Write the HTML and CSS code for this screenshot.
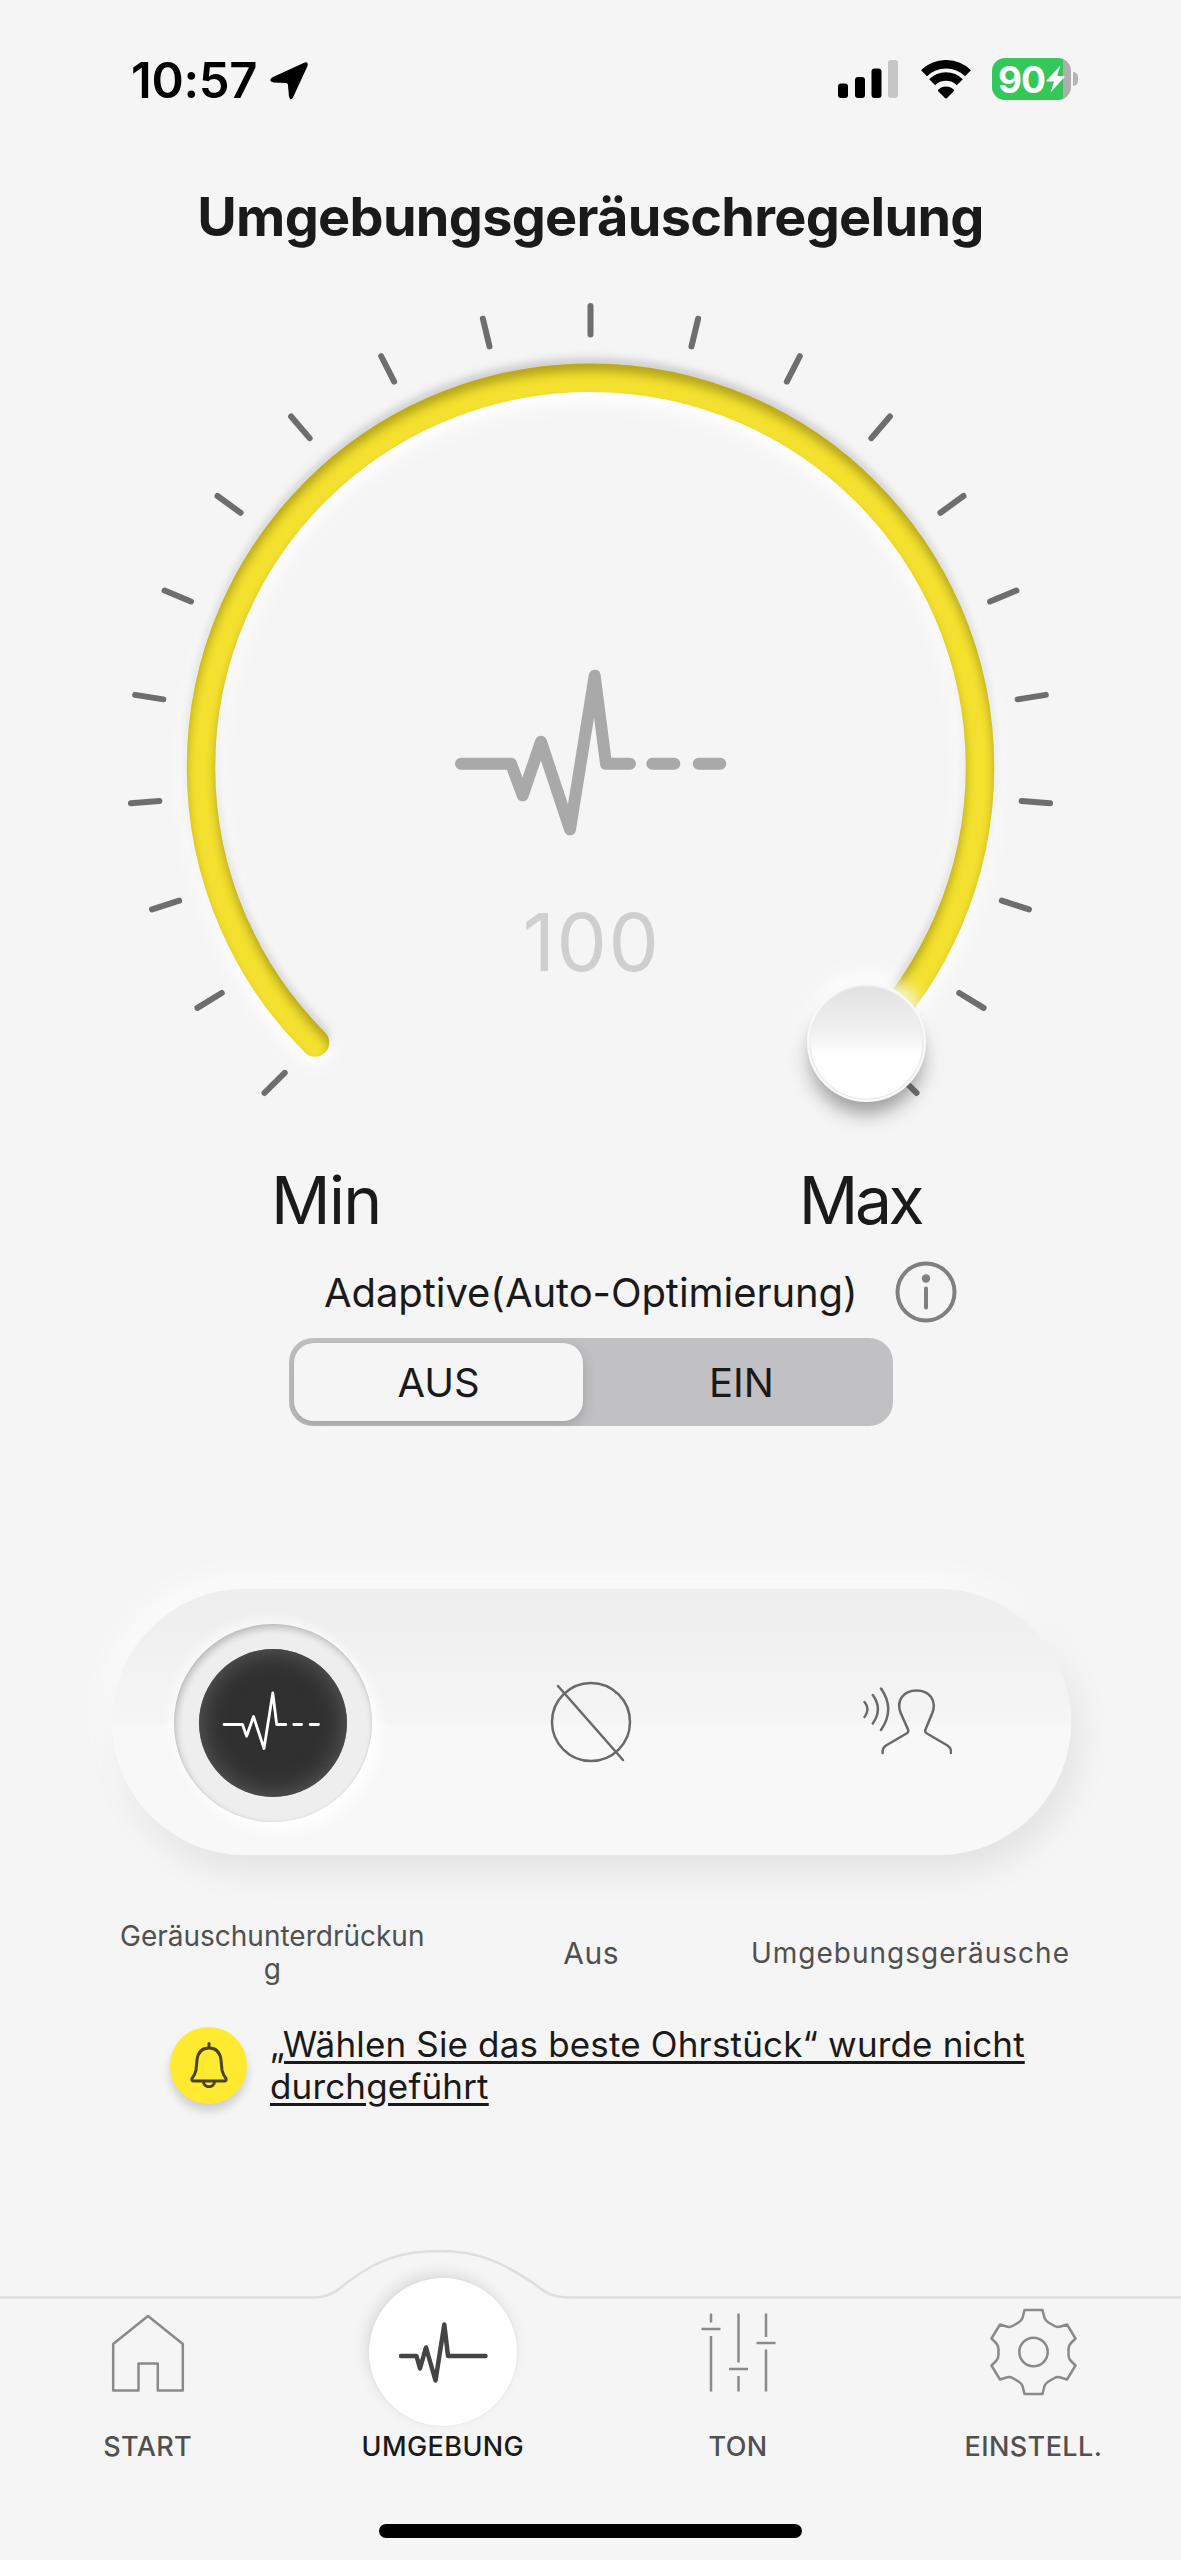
FILE: index.html
```html
<!DOCTYPE html>
<html lang="de">
  <head>
    <meta charset="UTF-8">
    <meta name="viewport" content="width=device-width, initial-scale=1">
    <title>Umgebungsgeräuschregelung</title>
    <link rel="stylesheet" href="styles.css">
  </head>
  <body>
    <header class="status-bar">
      <span class="time">10:57</span>
      <svg class="location" width="38" height="38" viewBox="0 0 38 38">
        <path d="M33 1.200Q38.800 -1.500 37.500 4L23 35.500Q20.300 39.500 19 34.500L17.900 22.500Q17.700 21 16 20.900L3.500 20.500Q-2.200 19.200 2 15.500Z"/>
      </svg>
      <svg class="signal" width="61" height="38" viewBox="0 0 61 38">
        <rect x="0" y="23.500" width="10" height="14.500" rx="3"/>
        <rect x="17" y="17" width="10" height="21" rx="3"/>
        <rect x="33.500" y="8.500" width="10" height="29.500" rx="3"/>
        <rect class="off" x="50" y="0" width="10" height="38" rx="3"/>
      </svg>
      <svg class="wifi" width="54" height="39" viewBox="0 0 54 39">
        <path d="M5 13.200A31.500 31.500 0 0 1 49 13.200M13.200 22.300A19.500 19.500 0 0 1 40.800 22.300"/>
        <path class="dot" d="M27 26.500Q31.500 26.500 34.600 29.600Q35.500 30.500 34.600 31.500L28 38Q27 39 26 38L19.400 31.500Q18.500 30.500 19.400 29.600Q22.500 26.500 27 26.500Z"/>
      </svg>
      <div class="battery">
        <div class="battery-body">
          <span>90</span>
          <svg width="19" height="28" viewBox="0 0 19 28"><path d="M14.500 0.500L0.500 15.500Q0 16.500 1 16.500H8L4.500 27.500L18.500 12Q19 11 18 11H11Z"/></svg>
        </div>
        <div class="battery-tip"></div>
      </div>
    </header>

    <h1 class="title">Umgebungsgeräuschregelung</h1>

    <svg class="dial" width="1181" height="865" viewBox="-590.500 -493 1181 865">
      <defs>
        <line id="tick" y1="-461" y2="-432.500"/>
        <linearGradient id="knob" x1="0" y1="0" x2="0" y2="1">
          <stop offset="0" stop-color="#e1e1e1"/>
          <stop offset="0.4" stop-color="#f1f1f1"/>
          <stop offset="0.62" stop-color="#ffffff"/>
        </linearGradient>
        <filter id="groove" filterUnits="userSpaceOnUse" x="-460" y="-460" width="920" height="830" color-interpolation-filters="sRGB">
          <!-- light rim around the track -->
          <feGaussianBlur in="SourceAlpha" stdDeviation="13" result="b1"/>
          <feOffset in="b1" dy="8" result="o1"/>
          <feFlood flood-color="#ffffff" flood-opacity="1"/>
          <feComposite in2="o1" operator="in" result="light"/>
          <!-- soft dark edge above -->
          <feGaussianBlur in="SourceAlpha" stdDeviation="4.500" result="b2"/>
          <feOffset in="b2" dy="-5" result="o2"/>
          <feFlood flood-color="#85858f" flood-opacity="0.420"/>
          <feComposite in2="o2" operator="in" result="dark"/>
          <feGaussianBlur in="SourceAlpha" stdDeviation="4" result="b4"/>
          <feOffset in="b4" dy="5" result="o4"/>
          <feFlood flood-color="#ffffff"/>
          <feComposite in2="o4" operator="in" result="light2"/>
          <!-- inner shade -->
          <feGaussianBlur in="SourceAlpha" stdDeviation="5" result="b3"/>
          <feOffset in="b3" dy="8" result="o3"/>
          <feComposite in="SourceAlpha" in2="o3" operator="out" result="cut"/>
          <feFlood flood-color="#5a5000" flood-opacity="0.400"/>
          <feComposite in2="cut" operator="in" result="inner"/>
          <feMerge>
            <feMergeNode in="light"/>
            <feMergeNode in="dark"/>
            <feMergeNode in="light2"/>
            <feMergeNode in="SourceGraphic"/>
            <feMergeNode in="inner"/>
          </feMerge>
        </filter>
        <filter id="soft" x="-50%" y="-50%" width="200%" height="200%"><feGaussianBlur stdDeviation="10"/></filter>
      </defs>
      <path class="track" filter="url(#groove)" d="M-275.500 276.500A389.500 389.500 0 1 1 275.500 276.500"/>
      <g class="ticks" transform="translate(0 1)">
        <use href="#tick" transform="rotate(-135)"/>
        <use href="#tick" transform="rotate(-121.500)"/>
        <use href="#tick" transform="rotate(-108)"/>
        <use href="#tick" transform="rotate(-94.500)"/>
        <use href="#tick" transform="rotate(-81)"/>
        <use href="#tick" transform="rotate(-67.500)"/>
        <use href="#tick" transform="rotate(-54)"/>
        <use href="#tick" transform="rotate(-40.500)"/>
        <use href="#tick" transform="rotate(-27)"/>
        <use href="#tick" transform="rotate(-13.500)"/>
        <use href="#tick"/>
        <use href="#tick" transform="rotate(13.500)"/>
        <use href="#tick" transform="rotate(27)"/>
        <use href="#tick" transform="rotate(40.500)"/>
        <use href="#tick" transform="rotate(54)"/>
        <use href="#tick" transform="rotate(67.500)"/>
        <use href="#tick" transform="rotate(81)"/>
        <use href="#tick" transform="rotate(94.500)"/>
        <use href="#tick" transform="rotate(108)"/>
        <use href="#tick" transform="rotate(121.500)"/>
        <use href="#tick" transform="rotate(135)"/>
      </g>
      <circle cx="275" cy="267" r="59" fill="#ffffff" filter="url(#soft)"/>
      <circle cx="276" cy="291" r="56" fill="#000000" fill-opacity="0.380" filter="url(#soft)"/>
      <circle cx="276" cy="276.500" r="59.500" fill="#fafafa"/>
      <circle cx="276" cy="276.500" r="56.500" fill="url(#knob)" stroke="#ececec" stroke-width="1.500"/>
      <path class="pulse-big" d="M-129.500 -2.300H-79.500L-67.800 29.300L-49.500 -24.300L-20.500 63.300L4.200 -90.300L15.500 -2.300H39.500M61.800 -2.300H83.800M108.200 -2.300H129.800"/>
      <text class="value" x="1" y="205" text-anchor="middle">100</text>
    </svg>

    <div class="range">
      <span class="min">Min</span>
      <span class="max">Max</span>
    </div>

    <div class="adaptive">
      <span class="adaptive-label">Adaptive(Auto-Optimierung)</span>
      <svg class="info" width="62" height="62" viewBox="0 0 62 62">
        <circle cx="31" cy="31" r="28.500"/>
        <path d="M31 27.500V46.500"/>
        <circle class="dot" cx="31" cy="17.500" r="4.200"/>
      </svg>
    </div>

    <div class="segmented">
      <button class="segment selected">AUS</button>
      <button class="segment">EIN</button>
    </div>

    <div class="modes">
      <div class="mode">
        <div class="ring">
          <div class="ring-core">
            <svg class="pulse-small" width="100" height="62" viewBox="0 0 100 62">
              <path d="M3 34.500H21.500L25.600 46.300L32.500 26.500L43 58.500L51.800 3L55.700 34.500H64.800M72.800 34.500H80.600M89.200 34.500H97.500"/>
            </svg>
          </div>
        </div>
      </div>
      <div class="mode">
        <svg class="line-icon" width="82" height="82" viewBox="0 0 82 82">
          <circle cx="41" cy="41" r="39"/>
          <path d="M8 5L73 79"/>
        </svg>
      </div>
      <div class="mode">
        <svg class="line-icon person" width="90" height="68" viewBox="0 0 90 68">
          <path d="M20.600 66V64.500Q20.800 60.500 24 58.500L44.500 46.500Q47 45 46 42.500L38.500 25.500C34 13 42 3.600 54.500 3.600S75 13 70.500 25.500L63.500 42.500Q62.500 45 65 46.500L85.500 58.500Q88.800 60.500 89 64.500V66"/>
          <path d="M2.500 15Q8.500 22 2.500 30M10.800 8Q21 22 10.800 36.500M19 1.500Q33.500 22 19 43"/>
        </svg>
      </div>
    </div>
    <div class="mode-labels">
      <span class="mode-label noise">Geräuschunterdrückung</span>
      <span class="mode-label off">Aus</span>
      <span class="mode-label ambient">Umgebungsgeräusche</span>
    </div>

    <div class="notice">
      <div class="bell">
        <svg width="38" height="46" viewBox="0 0 38 46">
          <path d="M19 1.500V6M3.500 39H34.500Q36.500 39 36 36.500Q33 33 32 28L31 18C30 10 26 6 19 6S8 10 7 18L6 28Q5 33 2 36.500Q1.500 39 3.500 39ZM13.500 39.500C13.500 46.500 24.500 46.500 24.500 39.500"/>
        </svg>
      </div>
      <a class="notice-text">„Wählen Sie das beste Ohrstück“ wurde nicht<br>durchgeführt</a>
    </div>

    <nav class="tab-bar">
      <svg class="tab-edge" width="1181" height="70" viewBox="0 0 1181 70">
        <path d="M-2 57.500H314C330 57.500 338 50 349 41C378 20 400 11 440 11C478 11 502 22 533 43C544 51 550 57.500 570 57.500H1183"/>
      </svg>
      <a class="tab">
        <span class="tab-icon">
          <svg width="74" height="80" viewBox="0 -1.500 74 80">
            <path d="M2.200 77V30.500L37 2.500L71.800 30.500V77H46.800V50H27.500V77Z"/>
          </svg>
        </span>
        <span class="tab-label">START</span>
      </a>
      <a class="tab active">
        <span class="tab-icon">
          <svg width="90" height="62" viewBox="0 0 90 62">
            <path d="M3 35H18.500L22 47.500L28 26.500L37.500 59.500L46.300 3.500L50 35H87.500"/>
          </svg>
        </span>
        <span class="tab-label">UMGEBUNG</span>
      </a>
      <a class="tab">
        <span class="tab-icon">
          <svg width="78" height="82" viewBox="-0.500 -0.500 78 82">
            <path d="M11.500 2V11M11.500 24.500V80M39 2V51M39 64.500V80M66.500 2V25.500M66.500 38V80M2 17.500H21M29.500 57.500H48.500M57 31.500H76"/>
          </svg>
        </span>
        <span class="tab-label">TON</span>
      </a>
      <a class="tab">
        <span class="tab-icon">
          <svg width="88" height="88" viewBox="-44.500 -44 88 88">
            <path d="M-9 -42H9L11 -34Q12 -31.500 15 -29.500L21 -26Q23.500 -24.500 27 -25.500L33.500 -27.500L42 -13.500L37.500 -9Q35 -6.500 35 -3V3Q35 6.500 37.500 9L42 13.500L33.500 27.500L27 25.500Q23.500 24.500 21 26L15 29.500Q12 31.500 11 34L9 42H-9L-11 34Q-12 31.500 -15 29.500L-21 26Q-23.500 24.500 -27 25.500L-33.500 27.500L-42 13.500L-37.500 9Q-35 6.500 -35 3V-3Q-35 -6.500 -37.500 -9L-42 -13.500L-33.500 -27.500L-27 -25.500Q-23.500 -24.500 -21 -26L-15 -29.500Q-12 -31.500 -11 -34Z"/>
            <circle r="14.200"/>
          </svg>
        </span>
        <span class="tab-label">EINSTELL.</span>
      </a>
    </nav>
    <div class="home-indicator"></div>
  </body>
</html>
```

FILE: styles.css
```css
* { box-sizing: border-box; }
body {
  margin: 0;
  width: 1181px;
  height: 2560px;
  overflow: hidden;
  background-color: #f5f5f5;
  color: #1a1a1a;
  font-family: Inter, "Liberation Sans", sans-serif;
}
svg { display: block; flex: none; }

/* status bar */
.status-bar {
  display: flex;
  align-items: center;
  height: 161px;
  padding: 0 103px 0 131px;
  color: #000;
}
.time {
  font-size: 49px;
  font-weight: 600;
  letter-spacing: -0.3px;
  width: 139px;
  white-space: nowrap;
}
.signal { margin: -3px 20px 0 auto; }
.signal .off { fill: #c6c6c6; }
.wifi { margin: -3px 19px 0 0; fill: none; stroke: #000; stroke-width: 8.5; }
.wifi .dot { fill: #000; stroke: none; }
.battery { display: flex; align-items: center; gap: 2px; margin-top: -3px; }
.battery-body {
  display: flex;
  align-items: center;
  width: 79px;
  height: 42px;
  padding-left: 6px;
  border-radius: 13px;
  background: linear-gradient(90deg, #34c759 71px, #aeaeae 71px);
  color: #fff;
  font-size: 37px;
  font-weight: 700;
  letter-spacing: -1px;
}
.battery-body svg { fill: #fff; margin-left: 1px; }
.battery-tip {
  width: 5px;
  height: 14px;
  border-radius: 0 5px 5px 0;
  background-color: #b5b5b5;
}

.title {
  margin: 0;
  font-size: 54px;
  font-weight: 700;
  line-height: 112px;
  letter-spacing: -.7px;
  text-align: center;
}

/* dial */
.track { fill: none; stroke: #f3e02f; stroke-width: 28.5; stroke-linecap: round; }
.ticks { stroke: #6e6e6e; stroke-width: 6; stroke-linecap: round; }
.pulse-big {
  fill: none;
  stroke: #a9a9a9;
  stroke-width: 12;
  stroke-linecap: round;
  stroke-linejoin: round;
}
.value { fill: #cfcfcf; font-size: 80px; font-weight: 400; letter-spacing: 1.5px; }
.range {
  display: flex;
  justify-content: space-between;
  height: 124px;
  padding: 0 260px 0 271px;
  font-size: 66px;
  line-height: 124px;
}
.min { letter-spacing: -1.7px; }
.max { letter-spacing: -3.5px; }

.adaptive { display: flex; align-items: center; height: 60px; padding-left: 324px; }
.adaptive-label { width: 571px; font-size: 40px; letter-spacing: -.06px; white-space: nowrap; }
.info { fill: none; stroke: #808080; stroke-width: 4; stroke-linecap: round; }
.info .dot { fill: #808080; stroke: none; }
.segmented {
  display: flex;
  width: 604px;
  height: 88px;
  margin: 16px auto 0;
  padding: 5px;
  border-radius: 24px;
  background-color: #c1c1c3;
  overflow: hidden;
}
.segment {
  width: 305px;
  padding: 0 0 0 13px;
  border: 0;
  border-radius: 20px;
  background: none;
  color: inherit;
  font: 400 40px Inter, sans-serif;
}
.segment.selected {
  width: 289px;
  padding-left: 1px;
  background-color: #f5f5f5;
  box-shadow: 0 5px 14px rgba(0, 0, 0, .16);
}

/* mode switch */
.modes {
  display: grid;
  grid-template-columns: repeat(3, 1fr);
  width: 959px;
  height: 266px;
  margin: 163px 0 0 112px;
  border-radius: 133px;
  background: linear-gradient(#eeeeee, #f5f5f5 50%, #f8f8f8 51%);
  box-shadow: 8px 16px 34px rgba(0, 0, 0, .08), -8px -12px 30px rgba(255, 255, 255, .8);
}
.mode { display: flex; align-items: center; justify-content: center; }
.ring {
  display: flex;
  align-items: center;
  justify-content: center;
  width: 198px;
  height: 198px;
  margin: 1px 0 0 3px;
  border-radius: 50%;
  background-color: #eeeeee;
  box-shadow: inset 2px 4px 7px rgba(0, 0, 0, .2), inset 0 0 2px rgba(0, 0, 0, .12), 7px 9px 14px #fff, -3px -4px 12px rgba(255, 255, 255, .7);
}
.ring-core {
  display: flex;
  align-items: center;
  justify-content: center;
  width: 148px;
  height: 148px;
  border-radius: 50%;
  background-color: #303030;
  box-shadow: inset 0 0 26px #606060;
}
.pulse-small {
  margin: -3px 4px 0 0;
  fill: none;
  stroke: #fff;
  stroke-width: 2.8;
  stroke-linecap: round;
  stroke-linejoin: round;
}
.line-icon { margin-right: 1px; fill: none; stroke: #696969; stroke-width: 2.5; stroke-linecap: round; }
.person { margin: -2px 9px 0 0; }
.mode-labels {
  display: grid;
  grid-template-columns: repeat(3, 1fr);
  align-items: center;
  justify-items: center;
  width: 959px;
  height: 94px;
  margin: 51px 0 0 112px;
  color: #505050;
  text-align: center;
}
.mode-label { font-size: 28px; line-height: 33px; }
.mode-label.noise { width: 308px; margin-left: 1px; word-break: break-all; }
.mode-label.off { font-size: 30px; letter-spacing: .6px; }
.mode-label.ambient { margin-right: 1px; letter-spacing: 1px; }

/* notice */
.notice { display: flex; align-items: center; height: 86px; margin: 22px 0 0 170px; }
.bell {
  display: flex;
  align-items: center;
  justify-content: center;
  width: 77px;
  height: 77px;
  margin-right: 23px;
  border-radius: 50%;
  background-color: #ffea30;
  box-shadow: 0 7px 10px rgba(0, 0, 0, .16);
}
.bell svg { fill: none; stroke: #4a4420; stroke-width: 3; stroke-linecap: round; }
.notice-text {
  font-size: 35px;
  line-height: 42.5px;
  letter-spacing: .16px;
  white-space: nowrap;
  text-decoration: underline;
  text-decoration-thickness: 3px;
  text-underline-offset: 4px;
}

/* tab bar */
.tab-bar {
  position: relative;
  display: grid;
  grid-template-columns: repeat(4, 1fr);
  height: 225px;
  margin-top: 132px;
  padding-top: 38px;
}
.tab-edge { position: absolute; left: 0; top: 0; fill: none; stroke: #dedede; stroke-width: 2.5; }
.tab { position: relative; display: flex; flex-direction: column; align-items: center; }
.tab-icon { display: flex; align-items: center; justify-content: center; width: 148px; height: 148px; }
.tab-icon svg { fill: none; stroke: #8a8a8a; stroke-width: 2.5; stroke-linejoin: round; }
.tab.active .tab-icon {
  border-radius: 50%;
  background-color: #fff;
  box-shadow: -3px -5px 14px rgba(0, 0, 0, .1), 0 0 3px rgba(0, 0, 0, .06);
}
.tab.active svg { stroke: #444; stroke-width: 4.5; stroke-linecap: round; }
.tab-label {
  margin-top: 2px;
  color: #505050;
  font-size: 27px;
  font-weight: 450;
  line-height: 38px;
  letter-spacing: .4px;
}
.tab.active .tab-label { color: #1a1a1a; }
.home-indicator {
  width: 423px;
  height: 14px;
  margin: 59px auto 0;
  border-radius: 7px;
  background-color: #000;
}
```
